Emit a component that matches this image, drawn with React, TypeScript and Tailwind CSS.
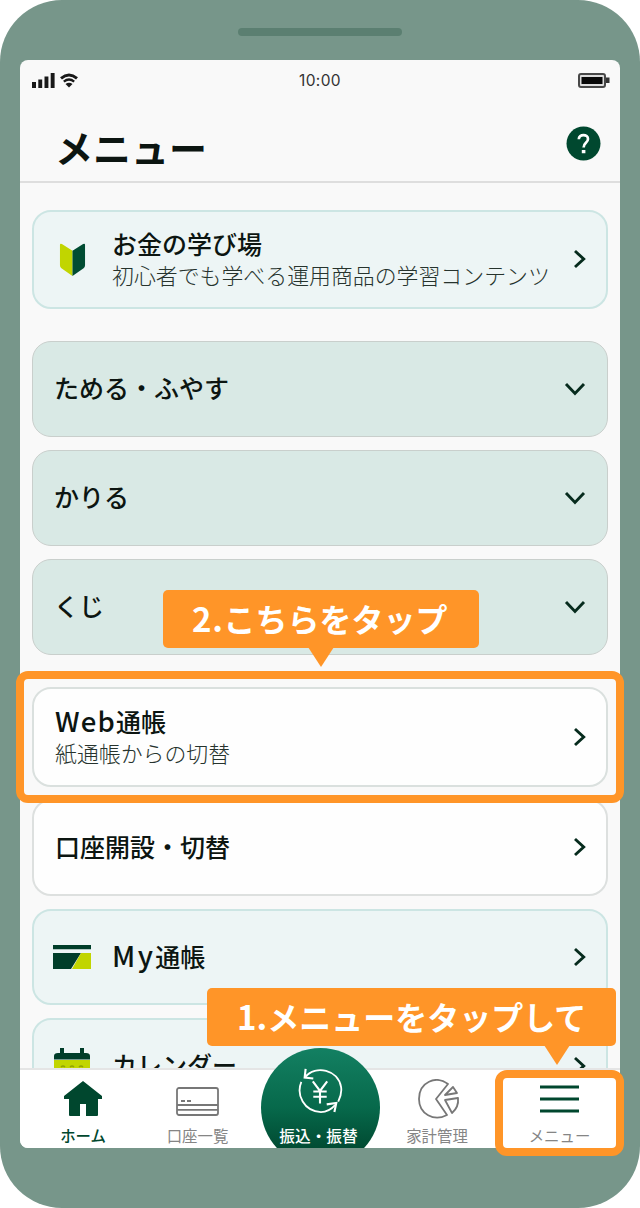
import type { ReactNode } from "react";

function Chevron({ down = false }: { down?: boolean }) {
  return down ? (
    <svg className="mr-[21px] shrink-0" width="22" height="16" viewBox="0 0 22 16" fill="none">
      <path d="M2 3L11 12.500L20 3" stroke="#062b1d" strokeWidth="2.900" />
    </svg>
  ) : (
    <svg className="mr-[19px] -mt-px shrink-0" width="14" height="20" viewBox="0 0 14 20" fill="none">
      <path d="M2 2L10.700 10L2 18" stroke="#062b1d" strokeWidth="2.900" />
    </svg>
  );
}

function BeginnerMark() {
  return (
    <svg className="mb-px" width="27" height="33" viewBox="0 0 28 34">
      <path d="M1 2Q1 0 3 1L14 8V34L2.500 26Q1 25 1 23Z" fill="#c1d500" />
      <path d="M27 2Q27 0 25 1L14 8V34L25.500 26Q27 25 27 23Z" fill="#004c32" />
    </svg>
  );
}

function PassbookIcon() {
  return (
    <svg width="38" height="24" viewBox="0 0 38 24">
      <path d="M0 0H38V4.300H0Z" fill="#003d29" />
      <path d="M0 8H28L18 24H0Z" fill="#003d29" />
      <path d="M28 8H38V24H19Z" fill="#c1d500" />
    </svg>
  );
}

function CalendarIcon() {
  return (
    <svg width="38" height="36" viewBox="0 0 38 36">
      <path d="M1 12H37V36H1Z" fill="#c1d500" />
      <path d="M1 11.500V8Q1 5 5 5H7V0H11V5H27V0H31V5H33Q37 5 37 8V11.500Z" fill="#003d29" />
      <path d="M8 19q2-2 4 0M17 19q2-2 4 0M26 19q2-2 4 0" stroke="#91a400" strokeWidth="1.500" fill="none" />
    </svg>
  );
}

type CardProps = {
  title: ReactNode;
  subtitle?: string;
  icon?: ReactNode;
  down?: boolean;
  className: string;
};

function Card({ title, subtitle, icon, down, className }: CardProps) {
  return (
    <div className={`flex w-[576px] shrink-0 items-center rounded-[19px] ${className}`}>
      {icon ? <div className="ml-[18px] flex w-[40px] shrink-0 justify-center">{icon}</div> : null}
      <div className={`flex-1 whitespace-nowrap text-[#0c1511] ${subtitle ? "pb-px" : "pb-[3px]"} ${icon ? "pl-[20px]" : "pl-[21px]"}`}>
        <div className="text-[25px] leading-[31px] font-medium">{title}</div>
        {subtitle ? (
          <div className="text-[21.9px] leading-[31px] font-light text-[#26332d]">{subtitle}</div>
        ) : null}
      </div>
      <Chevron down={down} />
    </div>
  );
}

function Callout({ children, className, tip }: { children: ReactNode; className: string; tip: string }) {
  return (
    <div className={`absolute z-20 h-[58px] rounded-[5px] bg-[#ff9528] text-white ${className}`}>
      <div className="-mt-px text-[32px] leading-[58px] font-bold whitespace-nowrap">{children}</div>
      <svg className={`absolute top-[57px] ${tip}`} width="26" height="20" viewBox="0 0 26 20">
        <path d="M0 0H26L13 20Z" fill="#ff9528" />
      </svg>
    </div>
  );
}

function NavItem({ label, icon, className }: { label: string; icon: ReactNode; className: string }) {
  return (
    <div className={`flex flex-col items-center ${className}`}>
      <div className="flex h-[54px] items-center justify-center">{icon}</div>
      <div className="text-[15.4px] leading-[22px] whitespace-nowrap">{label}</div>
    </div>
  );
}

export default function App() {
  return (
    <div className="bg-white">
      <div className="relative flex h-[1208px] w-[640px] flex-col items-center rounded-[62px] bg-[#77968a] font-['Noto_Sans_CJK_JP',sans-serif]">
        <div className="mt-[28px] h-[8px] w-[164px] shrink-0 rounded-full bg-[#5b7f71]" />

        <div className="mt-[24px] flex h-[1088px] w-[600px] shrink-0 flex-col overflow-hidden rounded-[8px] bg-[#f9f9f9]">
          <div className="flex h-[40px] shrink-0 items-center pr-[10px] pl-[12px] text-[#222]">
            <div className="flex w-[246px] items-center gap-[5px]">
              <svg width="23" height="15" viewBox="0 0 23 15" fill="#191919">
                <path d="M0 9H4V15H0ZM6.300 6.500H10.200V15H6.300ZM12.500 3.500H16.400V15H12.500ZM18.700 0H22.600V15H18.700Z" />
              </svg>
              <svg width="18" height="15" viewBox="0 0 18 15" fill="none" stroke="#191919">
                <path d="M1 5.300Q9-1.300 17 5.300" strokeWidth="3" />
                <path d="M3.800 8.700Q9 4.400 14.200 8.700" strokeWidth="2.300" />
                <path d="M5.500 11Q9 8.500 12.500 11L9 14.500Z" fill="#191919" stroke="none" />
              </svg>
            </div>
            <div className="mt-[2px] w-[84px] text-center font-['Inter',sans-serif] text-[15.500px] leading-[20px] tracking-[0.4px] text-[#333]">10:00</div>
            <svg className="ml-auto" width="32" height="15" viewBox="0 0 32 15">
              <rect x="1" y="1" width="26" height="13" rx="2" fill="#ddd" stroke="#484848" strokeWidth="2" />
              <path d="M3.500 4H24.500V11H3.500Z" fill="#080808" />
              <path d="M28 4.500H31.500V10H28Z" fill="#333" />
            </svg>
          </div>

          <div className="flex h-[83px] shrink-0 items-start justify-between border-b-2 border-[#dedede] pr-[19px] pl-[35px]">
            <h1 className="pt-[19px] text-[38px] leading-[56px] font-bold whitespace-nowrap text-[#0c1511]">メニュー</h1>
            <svg className="mt-[26px]" width="35" height="35" viewBox="0 0 35 35">
              <circle cx="17.500" cy="17.500" r="17" fill="#00482f" />
              <path d="M12.800 13.300C12.800 7.500 22.200 7.800 22 13C21.900 17 17.600 16.800 17.600 21.500" fill="none" stroke="#fff" strokeWidth="2.700" />
              <path d="M15.800 24H19.400V27.200H15.800Z" fill="#fff" />
            </svg>
          </div>

          <div className="flex min-h-0 flex-1 flex-col items-center overflow-hidden pt-[27px]">
            <Card className="h-[99px] border-2 border-[#cce5e3] bg-[#edf5f5]" icon={<BeginnerMark />} title="お金の学び場" subtitle="初心者でも学べる運用商品の学習コンテンツ" />
            <Card className="mt-[32px] h-[96px] border border-[#c9cfcc] bg-[#d9e9e5]" title="ためる・ふやす" down />
            <Card className="mt-[13px] h-[96px] border border-[#c9cfcc] bg-[#d9e9e5]" title="かりる" down />
            <Card className="mt-[13px] h-[96px] border border-[#c9cfcc] bg-[#d9e9e5]" title="くじ" down />
            <Card
              className="mt-[32px] h-[100px] border-2 border-[#dae0de] bg-[#fefefe]"
              title={<><span className="text-[27.5px] tracking-[1.2px]">Web</span>通帳</>}
              subtitle="紙通帳からの切替"
            />
            <Card className="mt-[12px] h-[97px] border-2 border-[#dde0df] bg-[#fefefe]" title="口座開設・切替" />
            <Card className="mt-[13px] h-[96px] border-2 border-[#cce5e3] bg-[#edf5f5]" icon={<PassbookIcon />} title={<><span className="text-[28px] tracking-[2.400px]">My</span>通帳</>} />
            <Card className="mt-[13px] h-[96px] border-2 border-[#cce5e3] bg-[#edf5f5]" icon={<CalendarIcon />} title="カレンダー" />
          </div>

          <nav className="relative z-10 flex h-[80px] shrink-0 border-t-2 border-[#e5e5e5] bg-white text-[#858585]">
            <NavItem
              className="w-[126px] font-medium text-[#00472e]"
              label="ホーム"
              icon={
                <svg className="mt-[4px]" width="38" height="36" viewBox="0 0 38 36" fill="#00472e">
                  <path d="M19 0L38 15V18H34V34Q34 35 33 35H22V23H16V35H6Q5 35 5 34V18H0V15Z" />
                </svg>
              }
            />
            <NavItem
              className="w-[103px]"
              label="口座一覧"
              icon={
                <svg className="mt-[8px]" width="43" height="29" viewBox="0 0 43 29" fill="none" stroke="#777" strokeWidth="1.800">
                  <rect x="1" y="1" width="41" height="27" rx="2" />
                  <path d="M1 18H42M1 22.800H42M5 14H9M11 14H15" />
                </svg>
              }
            />
            <div className="-mt-[22px] flex h-[119px] w-[142px] shrink-0 justify-center">
              <div className="flex h-[119px] w-[119px] flex-col items-center rounded-full bg-linear-to-b from-[#138062] via-[#07694b] to-[#003e28] text-white">
                <svg className="mt-[19px] shrink-0" width="46" height="48" viewBox="0 0 48 50" fill="none" stroke="#fff" strokeWidth="1.900">
                  <path d="M4.500 15.500C-1 29 7 46 25 47C31 47 36 44 40 39.500" />
                  <path d="M8 11C20-3 43 3 46 21C47 27 45 32 43 36" />
                  <path d="M9 2L8 11L17 12M31 39L41 37.500L39 47" strokeWidth="2.200" />
                  <path d="M16.500 15L24 25L31.500 15M24 25V38M17 25.500H31M17 31H31" strokeWidth="2.200" />
                </svg>
                <div className="mt-[9px] pr-[3px] text-[15.700px] leading-[24px] font-medium whitespace-nowrap">振込・振替</div>
              </div>
            </div>
            <NavItem
              className="w-[92px]"
              label="家計管理"
              icon={
                <svg className="mt-[3px] ml-[3px]" width="42" height="40" viewBox="0 0 42 40" fill="none" stroke="#777" strokeWidth="1.800" strokeLinejoin="round">
                  <path d="M30 5C18-4 1 3 1 20C1 35 16 43 29 36L18 20Z" />
                  <path d="M27 16L35 8L39 14ZM27 21L40 19Q41 28 34 34Z" />
                </svg>
              }
            />
            <NavItem
              className="w-[137px] pl-[16px]"
              label="メニュー"
              icon={
                <svg className="mt-[3px]" width="39" height="28" viewBox="0 0 39 28" stroke="#00472e" strokeWidth="3">
                  <path d="M0 2H39M0 14H39M0 26H39" />
                </svg>
              }
            />
          </nav>
        </div>

        <div className="absolute top-[671px] left-[16px] z-20 h-[132px] w-[608px] rounded-[12px] border-8 border-[#ff9528]" />
        <div className="absolute top-[1070px] left-[495px] z-20 h-[86px] w-[129px] rounded-[12px] border-8 border-[#ff9528]" />
        <Callout className="top-[590px] left-[163px] w-[316px] pl-[29px]" tip="left-[145px]">
          <span className="text-[33px] tracking-[0.7px]">2.</span>こちらをタップ
        </Callout>
        <Callout className="top-[988px] left-[207px] w-[409px] pl-[30px]" tip="left-[337px]">
          <span className="text-[33px]">1.</span>メニューをタップして
        </Callout>
      </div>
    </div>
  );
}
